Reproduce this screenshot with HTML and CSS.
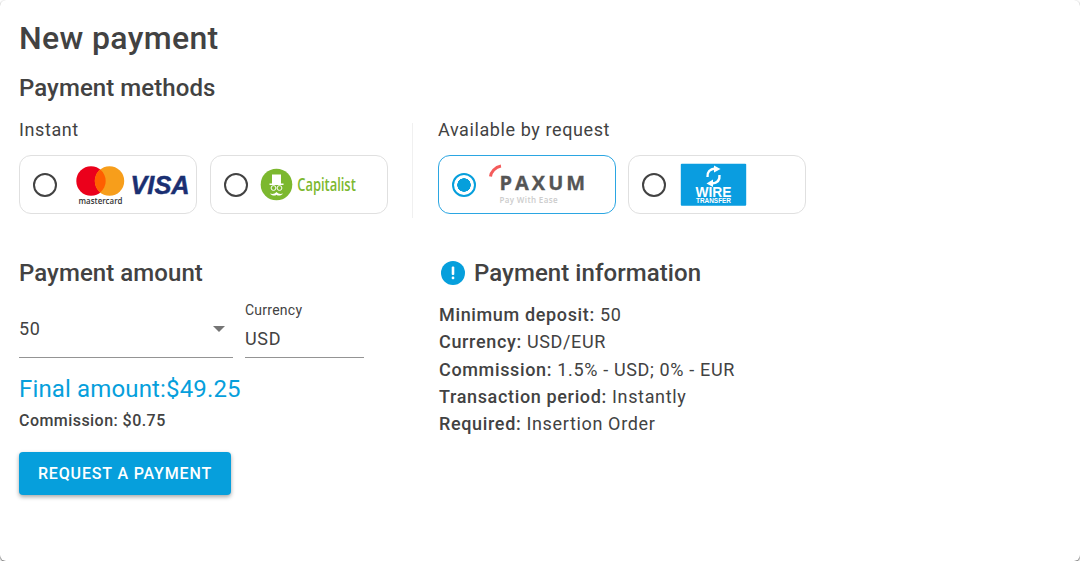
FILE: index.html
```html
<!DOCTYPE html>
<html lang="en">
<head>
    <meta charset="UTF-8">
    <title>New payment</title>
    <link rel="stylesheet" href="styles.css">
</head>
<body>
    <div class="card">
        <h1>New payment</h1>
        <h2 class="methods-title">Payment methods</h2>

        <div class="methods">
            <div class="group">
                <div class="group-label">Instant</div>
                <div class="group-items group-instant">
                    <div class="method">
                        <span class="radio"></span>
                        <svg class="logo" width="120" height="44" viewBox="0 0 120 44">
                            <circle cx="17" cy="18" r="14.700" fill="#eb001b"/>
                            <circle cx="35.500" cy="18" r="14.700" fill="#f79e1b"/>
                            <path d="M26.250 6.580A14.700 14.700 0 0 1 26.250 29.420A14.700 14.700 0 0 1 26.250 6.580z" fill="#ff5f00"/>
                            <text x="4.500" y="40.500" textLength="44" lengthAdjust="spacingAndGlyphs" class="mc-text">mastercard</text>
                            <text x="56.500" y="30.800" textLength="59" lengthAdjust="spacingAndGlyphs" class="visa-text">VISA</text>
                        </svg>
                    </div>
                    <div class="method">
                        <span class="radio"></span>
                        <svg class="logo" width="120" height="44" viewBox="0 0 120 44">
                            <circle cx="12.500" cy="21.500" r="15.800" fill="#7cb82f"/>
                            <path d="M8 11.500h9v9h2.500v1.500h-14v-1.500h2.500z" fill="#fff"/>
                            <circle cx="9.500" cy="25" r="2.400" fill="none" stroke="#fff" stroke-width="1"/>
                            <circle cx="15.500" cy="25" r="2.400" fill="none" stroke="#fff" stroke-width="1"/>
                            <path d="M6 30.500c2.500 1 4.800 .5 6.500-1.500c1.700 2 4 2.500 6.500 1.500c-2 2.500-4.800 2.500-6.500 1.200c-1.700 1.300-4.500 1.300-6.500-1.200z" fill="#fff"/>
                            <text x="33.200" y="27.500" textLength="58.600" lengthAdjust="spacingAndGlyphs" class="cap-text">Capitalist</text>
                        </svg>
                    </div>
                </div>
            </div>

            <div class="divider"></div>

            <div class="group">
                <div class="group-label">Available by request</div>
                <div class="group-items">
                    <div class="method selected">
                        <span class="radio checked"></span>
                        <svg class="logo" width="120" height="44" viewBox="0 0 120 44">
                            <path d="M-1.500 13.500C-1 9 3 4 9 3" fill="none" stroke="#f45b5b" stroke-width="3"/>
                            <text x="7.500" y="26.800" textLength="85.700" class="paxum-text">PAXUM</text>
                            <text x="7.500" y="39.800" textLength="58" class="paxum-sub">Pay With Ease</text>
                        </svg>
                    </div>
                    <div class="method">
                        <span class="radio"></span>
                        <svg class="logo" width="120" height="44" viewBox="0 0 120 44">
                            <rect x="-2.200" y="0.800" width="65.400" height="42" rx="1" fill="#0a9de0"/>
                            <path d="M24.500 14C24 9 27 6 32 5.500" fill="none" stroke="#fff" stroke-width="2.400"/>
                            <path d="M31 2.500L37.500 6L31 9.500z" fill="#fff"/>
                            <path d="M36.500 12C37 17 34 20 29 20.500" fill="none" stroke="#fff" stroke-width="2.400"/>
                            <path d="M30 16.500L23.500 20.500L30 24z" fill="#fff"/>
                            <text x="12.500" y="33.500" textLength="36" lengthAdjust="spacingAndGlyphs" class="wire-text">WIRE</text>
                            <text x="13" y="39.500" textLength="35" lengthAdjust="spacingAndGlyphs" class="wire-sub">TRANSFER</text>
                        </svg>
                    </div>
                </div>
            </div>
        </div>

        <div class="details">
            <div class="amount">
                <h2>Payment amount</h2>
                <div class="fields">
                    <div class="field field-select">
                        <span>50</span>
                        <span class="arrow"></span>
                    </div>
                    <div class="field field-currency">
                        <label>Currency</label>
                        <span>USD</span>
                    </div>
                </div>
                <div class="final">Final amount:$49.25</div>
                <div class="commission">Commission: $0.75</div>
                <button>Request a payment</button>
            </div>

            <div class="info">
                <h2 class="info-title">
                    <svg width="24" height="24" viewBox="0 0 24 24">
                        <circle cx="12" cy="12" r="12" fill="#069fdc"/>
                        <rect x="10.700" y="5.500" width="2.600" height="8.500" rx="1" fill="#fff"/>
                        <rect x="10.700" y="15.500" width="2.600" height="2.800" rx="1" fill="#fff"/>
                    </svg>
                    Payment information
                </h2>
                <p><b>Minimum deposit:</b> 50</p>
                <p><b>Currency:</b> USD/EUR</p>
                <p><b>Commission:</b> 1.5% - USD; 0% - EUR</p>
                <p><b>Transaction period:</b> Instantly</p>
                <p><b>Required:</b> Insertion Order</p>
            </div>
        </div>
    </div>
</body>
</html>
```

FILE: styles.css
```css
body {
    margin: 0;
    background-color: #fff;
    font-family: Roboto, sans-serif;
    color: #424242;
}
.card {
    height: 561px;
    box-sizing: border-box;
    padding: 16px 19px 0;
    background: #fff;
    border-radius: 6px;
    box-shadow: 0 1px 2px rgba(0,0,0,0.7);
}
h1 {
    margin: 0;
    font-size: 32px;
    line-height: 44px;
    font-weight: 500;
    letter-spacing: .35px;
}
h2 {
    margin: 0;
    font-size: 24px;
    line-height: 32px;
    font-weight: 500;
    letter-spacing: .07px;
}
.methods-title {
    margin-top: 12px;
}
.methods {
    display: flex;
    margin-top: 13px;
}
.divider {
    flex: none;
    align-self: flex-start;
    width: 1px;
    height: 95px;
    margin: 6px 25px 0 24.500px;
    background: #f0f0f0;
}
.group-label {
    font-size: 18px;
    line-height: 26px;
    margin-bottom: 12px;
    letter-spacing: .6px;
}
.group-items {
    display: flex;
    gap: 12px;
}
.group-instant {
    gap: 12.500px;
}
.method {
    display: flex;
    align-items: center;
    width: 178px;
    height: 59px;
    box-sizing: border-box;
    padding-left: 13px;
    border: 1px solid #e0e0e0;
    border-radius: 12px;
}
.method.selected {
    padding-left: 12.500px;
    border: 1.500px solid #2ba6e2;
}
.radio {
    flex: none;
    width: 24px;
    height: 24px;
    box-sizing: border-box;
    border: 2.500px solid #424242;
    border-radius: 50%;
}
.radio.checked {
    border-color: #069fdc;
    background: radial-gradient(circle, #069fdc 0 6.500px, #fff 7px);
}
.logo {
    flex: none;
    margin-left: 16.500px;
    overflow: visible;
}
.mc-text {
    font-family: "Open Sans", sans-serif;
    font-size: 8.500px;
    font-weight: 600;
    fill: #333;
}
.visa-text {
    font-family: "Liberation Sans", sans-serif;
    font-size: 26px;
    font-weight: bold;
    font-style: italic;
    fill: #1a2f72;
    stroke: #1a2f72;
    stroke-width: .5px;
}
.cap-text {
    font-family: "Open Sans", sans-serif;
    font-size: 18px;
    font-weight: 600;
    fill: #7cb82f;
}
.paxum-text {
    font-family: "Open Sans", sans-serif;
    font-size: 20px;
    font-weight: 700;
    fill: #555;
    stroke: #555;
    stroke-width: .3px;
}
.paxum-sub {
    font-family: "Open Sans", sans-serif;
    font-size: 8px;
    font-weight: 600;
    fill: #ccc;
}
.wire-text {
    font-family: "Liberation Sans", sans-serif;
    font-size: 14.400px;
    font-weight: bold;
    fill: #fff;
}
.wire-sub {
    font-family: "Liberation Sans", sans-serif;
    font-size: 6.500px;
    font-weight: bold;
    fill: #fff;
}
.details {
    display: flex;
    margin-top: 39px;
}
.amount {
    width: 420px;
}
.fields {
    display: flex;
    gap: 12px;
    margin-top: 11px;
}
.field {
    height: 58px;
    box-sizing: border-box;
    border-bottom: 1px solid #949494;
    font-size: 18px;
    letter-spacing: .65px;
}
.field-select {
    width: 214px;
    display: flex;
    align-items: center;
    justify-content: space-between;
    padding-right: 8px;
}
.arrow {
    width: 0;
    height: 0;
    border-left: 6px solid transparent;
    border-right: 6px solid transparent;
    border-top: 6px solid #757575;
}
.field-currency {
    width: 119px;
}
.field-currency label {
    display: block;
    font-size: 14px;
    line-height: 20px;
    margin-bottom: 8px;
    letter-spacing: .25px;
}
.final {
    margin-top: 15px;
    font-size: 24px;
    line-height: 32px;
    color: #069fdc;
    letter-spacing: .15px;
}
.commission {
    margin-top: 5px;
    font-size: 16px;
    line-height: 22px;
    font-weight: 500;
    letter-spacing: .45px;
}
button {
    display: block;
    width: 212px;
    height: 43px;
    margin-top: 20px;
    background-color: #069fdc;
    color: #fff;
    border: none;
    border-radius: 4px;
    font-family: Roboto, sans-serif;
    font-size: 16px;
    font-weight: 500;
    letter-spacing: .85px;
    text-transform: uppercase;
    box-shadow: 0 2px 4px rgba(0,0,0,0.35);
}
.info-title {
    display: flex;
    align-items: center;
    gap: 9px;
    margin-left: 2px;
    margin-bottom: 12px;
}
.info p {
    margin: 0;
    font-size: 18px;
    line-height: 27.300px;
    letter-spacing: .65px;
}
.info b {
    font-weight: 500;
}
```
